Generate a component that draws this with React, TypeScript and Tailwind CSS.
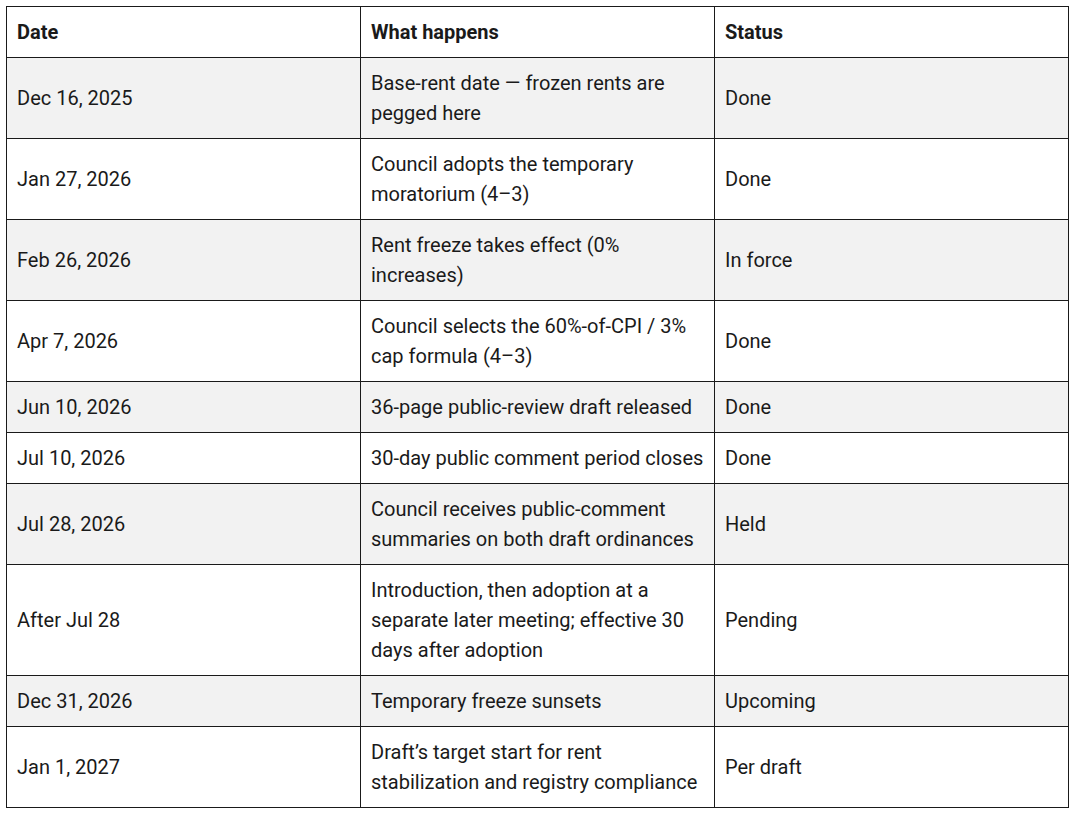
const rows: [string, string, string][] = [
  ["Dec 16, 2025", "Base-rent date — frozen rents are pegged here", "Done"],
  ["Jan 27, 2026", "Council adopts the temporary moratorium (4–3)", "Done"],
  ["Feb 26, 2026", "Rent freeze takes effect (0% increases)", "In force"],
  ["Apr 7, 2026", "Council selects the 60%-of-CPI / 3% cap formula (4–3)", "Done"],
  ["Jun 10, 2026", "36-page public-review draft released", "Done"],
  ["Jul 10, 2026", "30-day public comment period closes", "Done"],
  ["Jul 28, 2026", "Council receives public-comment summaries on both draft ordinances", "Held"],
  [
    "After Jul 28",
    "Introduction, then adoption at a separate later meeting; effective 30 days after adoption",
    "Pending",
  ],
  ["Dec 31, 2026", "Temporary freeze sunsets", "Upcoming"],
  ["Jan 1, 2027", "Draft’s target start for rent stabilization and registry compliance", "Per draft"],
];

export default function App() {
  return (
    <div className="min-h-screen bg-white pt-[6px] pl-[6px] font-['Roboto',sans-serif] text-[#1a1a1a]">
      <table className="w-[1063px] table-fixed border-collapse text-[20px] leading-[30px]">
        <thead>
          <tr>
            <th className="w-1/3 border border-[#1a1a1a] px-[10px] py-[10px] text-left font-bold">Date</th>
            <th className="w-1/3 border border-[#1a1a1a] px-[10px] py-[10px] text-left font-bold">What happens</th>
            <th className="w-1/3 border border-[#1a1a1a] px-[10px] py-[10px] text-left font-bold">Status</th>
          </tr>
        </thead>
        <tbody>
          {rows.map((r, i) => (
            <tr key={i} className={i % 2 === 0 ? "bg-[#f2f2f2]" : "bg-white"}>
              <td className="border border-[#1a1a1a] px-[10px] py-[10px] align-middle">{r[0]}</td>
              <td className="border border-[#1a1a1a] px-[10px] py-[10px] align-middle">{r[1]}</td>
              <td className="border border-[#1a1a1a] px-[10px] py-[10px] align-middle">{r[2]}</td>
            </tr>
          ))}
        </tbody>
      </table>
    </div>
  );
}
